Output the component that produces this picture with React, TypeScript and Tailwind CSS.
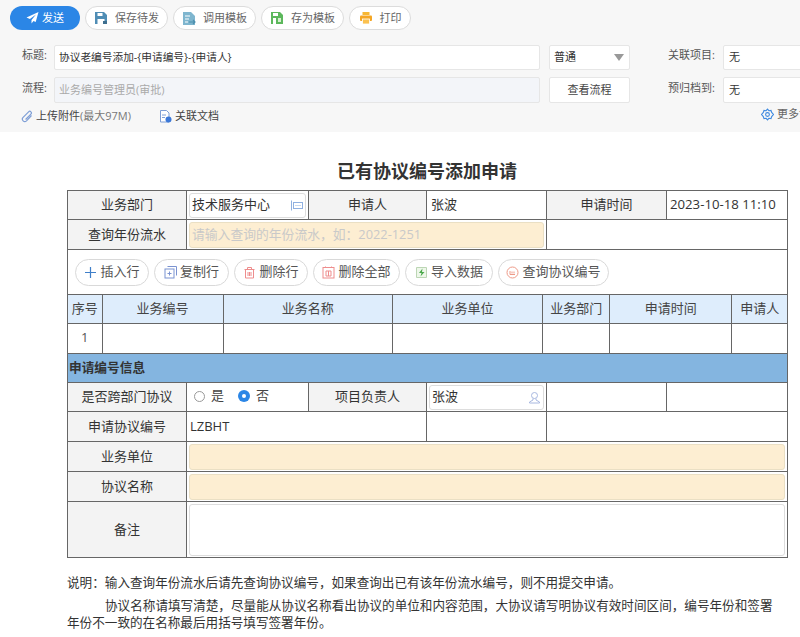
import type { ReactNode } from "react";

const font = "font-['Open_Sans','Noto_Sans_CJK_SC',sans-serif]";

function ToolButton({ icon, label, width }: { icon: ReactNode; label: string; width: string }) {
  return (
    <button className={`${width} h-6 shrink-0 rounded-full border border-[#dcdcdc] bg-white flex items-center justify-center gap-[7px] text-[11px] text-[#666]`}>
      {icon}
      {label}
    </button>
  );
}

function RowButton({ icon, label, width }: { icon: ReactNode; label: string; width: string }) {
  return (
    <button className={`${width} h-[27px] shrink-0 rounded-full border border-[#d9d9d9] bg-white flex items-center justify-center gap-[3px] text-[13px] text-[#555]`}>
      {icon}
      {label}
    </button>
  );
}

const SaveIcon = (
  <svg width="14" height="14" viewBox="0 0 14 14">
    <path d="M1 1h9l3 3v9H1z" fill="#4f8db5" />
    <rect x="3.5" y="2" width="5" height="3" fill="#fff" />
    <rect x="3.5" y="8" width="7" height="5" fill="#fff" />
    <rect x="9" y="10" width="4" height="3" fill="#3f6f8f" />
  </svg>
);

const LoadIcon = (
  <svg width="14" height="15" viewBox="0 0 14 15">
    <path d="M1 1h8l4 4v9H1z" fill="#7fb6cf" />
    <path d="M3 5h5M3 8h4M3 11h3" stroke="#fff" strokeWidth="1.2" />
    <path d="M7 11h6M11 9l2 2-2 2" stroke="#4d8fae" strokeWidth="1.2" fill="none" />
  </svg>
);

const SaveTemplateIcon = (
  <svg width="14" height="14" viewBox="0 0 14 14">
    <path d="M1 1h9l3 3v9H1z" fill="#5cb85c" />
    <rect x="3" y="2" width="5" height="3" fill="#fff" />
    <rect x="3" y="7" width="3" height="6" fill="#fff" />
    <rect x="8" y="7" width="3" height="4" fill="#d7f0d0" />
  </svg>
);

const PrintIcon = (
  <svg width="14" height="14" viewBox="0 0 14 14">
    <rect x="3.5" y="1" width="7" height="3" fill="#f7b733" />
    <rect x="1" y="4.5" width="12" height="5.5" rx="1" fill="#f5a623" />
    <rect x="3.5" y="8" width="7" height="5" fill="#fbc14f" stroke="#fff" strokeWidth="0.8" />
  </svg>
);

function Th({ children }: { children: ReactNode }) {
  return <td className="border border-[#666] bg-[#f3f3f3] text-center text-[13px] text-[#333]">{children}</td>;
}

function Field({ className, children }: { className: string; children?: ReactNode }) {
  return <div className={`h-[26px] mx-[2px] rounded-[3px] border flex items-center px-[2px] ${className}`}>{children}</div>;
}

export default function App() {
  return (
    <div className={`w-[800px] h-[637px] overflow-hidden bg-white ${font} text-[#333]`}>
      <div className="h-[132px] bg-[#f7f7f7] overflow-hidden">
        <div className="flex gap-[5px] pl-[10px] pt-[6px]">
          <button className="w-[70px] h-6 shrink-0 rounded-full bg-[#2b86e6] text-white text-[11px] flex items-center justify-center gap-[3px]">
            <svg width="13" height="12" viewBox="0 0 13 12">
              <path d="M12.5 0L0.5 5.5l3.4 1.6L10 2.5 5.5 8v3.5l2-2.4 2.2 1z" fill="#fff" />
            </svg>
            发送
          </button>
          <ToolButton icon={SaveIcon} label="保存待发" width="w-[83px]" />
          <ToolButton icon={LoadIcon} label="调用模板" width="w-[83px]" />
          <ToolButton icon={SaveTemplateIcon} label="存为模板" width="w-[83px]" />
          <ToolButton icon={PrintIcon} label="打印" width="w-[62px]" />
        </div>

        <div className="flex items-center mt-[15px] h-[25px] text-[11px]">
          <span className="w-[54px] shrink-0 pl-[22px] text-[#555] -mt-1">标题:</span>
          <div className="w-[486px] shrink-0 h-full bg-white border border-[#e6e6e6] rounded-[2px] flex items-center px-[4px] text-[10.700px] text-[#333]">
            协议老编号添加-{"{"}申请编号{"}"}-{"{"}申请人{"}"}
          </div>
          <div className="w-[81px] shrink-0 h-full ml-[9px] bg-white border border-[#e6e6e6] rounded-[2px] flex items-center justify-between pl-[4px] pr-[5px]">
            普通
            <svg width="10" height="7" viewBox="0 0 10 7"><path d="M0 0h10L5 7z" fill="#999" /></svg>
          </div>
          <span className="w-[55px] ml-[38px] shrink-0 text-[#555] -mt-1 whitespace-nowrap">关联项目:</span>
          <div className="w-[100px] shrink-0 h-full bg-white border border-[#e6e6e6] rounded-[2px] flex items-center px-[5px]">无</div>
        </div>

        <div className="flex items-center mt-[7px] h-[26px] text-[11px]">
          <span className="w-[54px] shrink-0 pl-[22px] text-[#555] -mt-1">流程:</span>
          <div className="w-[486px] shrink-0 h-full bg-[#f3f5f9] border border-[#e6e6e6] rounded-[2px] flex items-center px-[4px] text-[#aaa]">
            业务编号管理员(审批)
          </div>
          <div className="w-[81px] shrink-0 h-full ml-[9px] bg-white border border-[#e6e6e6] rounded-[2px] flex items-center justify-center text-[#444]">
            查看流程
          </div>
          <span className="w-[55px] ml-[38px] shrink-0 text-[#555] -mt-1 whitespace-nowrap">预归档到:</span>
          <div className="w-[100px] shrink-0 h-full bg-white border border-[#e6e6e6] rounded-[2px] flex items-center px-[5px]">无</div>
        </div>

        <div className="flex items-center mt-[5px] h-[16px] text-[11px] text-[#444]">
          <svg className="ml-[21px] shrink-0" width="12" height="13" viewBox="0 0 12 13" fill="none" stroke="#7f9fd6" strokeWidth="1.2">
            <path d="M10.5 5.5L5.5 10.8a2.4 2.4 0 01-3.4-3.4L7.6 1.8a1.6 1.6 0 012.3 2.3L4.6 9.5" />
          </svg>
          <span className="ml-[3px] w-[123px] shrink-0 whitespace-nowrap">
            上传附件<span className="text-[#777]">(最大97M)</span>
          </span>
          <svg className="shrink-0" width="13" height="13" viewBox="0 0 13 13">
            <path d="M1.500.500h6l2.500 2.500v9h-8.500z" fill="#fff" stroke="#7f9fd6" />
            <path d="M3 5h4M3 7.500h3" stroke="#7f9fd6" />
            <circle cx="9.500" cy="9.500" r="3" fill="#3b78d8" />
          </svg>
          <span className="ml-[3px] w-[586px] shrink-0 whitespace-nowrap">关联文档</span>
          <svg className="-mt-1 shrink-0" width="13" height="13" viewBox="0 0 24 24" fill="none" stroke="#3f8ae0" strokeWidth="2">
            <circle cx="12" cy="12" r="3.500" />
            <path d="M12 2l2.500 3 4-.6 1.200 3.800L23 12l-3.300 3.800-1.200 3.800-4-.6L12 22l-2.500-3-4 .6-1.200-3.800L1 12l3.300-3.800 1.200-3.800 4 .6z" />
          </svg>
          <span className="ml-[3px] -mt-1 shrink-0 whitespace-nowrap text-[#666]">更多设置</span>
        </div>
      </div>

      <h1 className="text-center text-[18px] leading-[24px] font-bold text-[#333] mt-[27px] mb-[7px] pl-[54px]">已有协议编号添加申请</h1>

      <table className="ml-[67px] w-[720px] table-fixed border-collapse text-[13px]">
        <colgroup>
          <col className="w-[119px]" />
          <col className="w-[122px]" />
          <col className="w-[118px]" />
          <col className="w-[120px]" />
          <col className="w-[120px]" />
          <col className="w-[121px]" />
        </colgroup>
        <tbody>
          <tr className="h-[29px]">
            <Th>业务部门</Th>
            <td className="border border-[#666] p-0">
              <Field className="border-[#ddd] bg-white justify-between !h-[25px]">
                技术服务中心
                <svg width="12" height="11" viewBox="0 0 12 11" fill="none" stroke="#8fb0e0">
                  <path d="M.5.500v10" />
                  <rect x="2.500" y="2.500" width="9" height="6" />
                  <path d="M4.500 5.500h5" strokeDasharray="1 1" />
                </svg>
              </Field>
            </td>
            <Th>申请人</Th>
            <td className="border border-[#666] px-[4px]">张波</td>
            <Th>申请时间</Th>
            <td className="border border-[#666] px-[3px] whitespace-nowrap text-[13.200px]">2023-10-18 11:10</td>
          </tr>
          <tr className="h-[30px]">
            <Th>查询年份流水</Th>
            <td colSpan={3} className="border border-[#666] p-0">
              <Field className="border-[#eadfc4] bg-[#fdeed2] text-[#c9c9c9] text-[12.800px]">请输入查询的年份流水，如：2022-1251</Field>
            </td>
            <td colSpan={2} className="border border-[#666]" />
          </tr>
          <tr className="h-[45px]">
            <td colSpan={6} className="border border-[#666] p-0">
              <div className="flex gap-[5px] pl-[7px]">
                <RowButton
                  width="w-[74px]"
                  label="插入行"
                  icon={
                    <svg width="13" height="13" viewBox="0 0 13 13"><path d="M6.500 1v11M1 6.500h11" stroke="#3f7fc9" strokeWidth="1.200" /></svg>
                  }
                />
                <RowButton
                  width="w-[75px]"
                  label="复制行"
                  icon={
                    <svg width="13" height="13" viewBox="0 0 13 13" fill="none" stroke="#7b93d1">
                      <path d="M3.500.500h9v9" />
                      <rect x="1" y="3" width="9" height="9" />
                      <path d="M5.500 5.500v4M3.500 7.500h4" />
                    </svg>
                  }
                />
                <RowButton
                  width="w-[74px]"
                  label="删除行"
                  icon={
                    <svg width="13" height="13" viewBox="0 0 13 13" fill="none" stroke="#ee8d8d">
                      <path d="M1.500 3.500h10M4.500 3.500v-2h4v2M2.500 3.500v8.500h8v-8.500M5 6v4M6.500 6v4M8 6v4" />
                    </svg>
                  }
                />
                <RowButton
                  width="w-[87px]"
                  label="删除全部"
                  icon={
                    <svg width="13" height="13" viewBox="0 0 13 13" fill="none" stroke="#ee8d8d">
                      <rect x="1" y="1.500" width="11" height="10.500" />
                      <path d="M3.500 1.500v-1M9.500 1.500v-1M4 5h5v5h-5zM6.500 5v5" />
                    </svg>
                  }
                />
                <RowButton
                  width="w-[88px]"
                  label="导入数据"
                  icon={
                    <svg width="13" height="13" viewBox="0 0 13 13">
                      <path d="M1.500 1.500h10v10h-10z" fill="#eef7ea" stroke="#bcd6b4" />
                      <path d="M7.500 2.500L4 7h2.500L5.500 10.500 9.500 6H7z" fill="#4aa84a" />
                    </svg>
                  }
                />
                <RowButton
                  width="w-[111px]"
                  label="查询协议编号"
                  icon={
                    <svg width="13" height="13" viewBox="0 0 13 13" fill="none" stroke="#ee9a88">
                      <circle cx="6.500" cy="6.500" r="5.500" />
                      <path d="M4 5v3.500h5M6 5.500v2M8 5.500v2" />
                    </svg>
                  }
                />
              </div>
            </td>
          </tr>
          <tr>
            <td colSpan={6} className="border-x border-[#666] p-0">
              <table className="w-full table-fixed border-collapse">
                <colgroup>
                  <col className="w-[34px]" />
                  <col className="w-[121px]" />
                  <col className="w-[169px]" />
                  <col className="w-[150px]" />
                  <col className="w-[67px]" />
                  <col className="w-[122px]" />
                  <col className="w-[55px]" />
                </colgroup>
                <tbody>
                  <tr className="h-[28px] bg-[#deedfc] text-center text-[#444]">
                    {["序号", "业务编号", "业务名称", "业务单位", "业务部门", "申请时间", "申请人"].map((h) => (
                      <td key={h} className="border border-[#666] border-t-0 first:border-l-0 last:border-r-0 whitespace-nowrap">{h}</td>
                    ))}
                  </tr>
                  <tr className="h-[30px] text-center text-[#555]">
                    <td className="border border-[#666] border-l-0">1</td>
                    <td className="border border-[#666]" />
                    <td className="border border-[#666]" />
                    <td className="border border-[#666]" />
                    <td className="border border-[#666]" />
                    <td className="border border-[#666]" />
                    <td className="border border-[#666] border-r-0" />
                  </tr>
                </tbody>
              </table>
            </td>
          </tr>
          <tr className="h-[29px] bg-[#84b5e0]">
            <td colSpan={6} className="border border-[#666] border-t-0 px-[1px] font-bold text-[12.700px] text-[#333]">申请编号信息</td>
          </tr>
          <tr className="h-[29px]">
            <Th>是否跨部门协议</Th>
            <td className="border border-[#666] px-[7px]">
              <div className="flex items-center text-[#444] -mt-[2px]">
                <span className="w-[11px] h-[11px] rounded-full border border-[#999] bg-white" />
                <span className="ml-[6px]">是</span>
                <span className="ml-[14px] w-[12px] h-[12px] rounded-full bg-[#2b86e6] flex items-center justify-center">
                  <span className="w-[4px] h-[4px] rounded-full bg-white" />
                </span>
                <span className="ml-[6px]">否</span>
              </div>
            </td>
            <Th>项目负责人</Th>
            <td className="border border-[#666] p-0">
              <Field className="border-[#ddd] bg-white justify-between !h-[25px]">
                张波
                <svg width="13" height="13" viewBox="0 0 13 13" fill="none" stroke="#a8b8e0">
                  <circle cx="6.500" cy="4.500" r="3" />
                  <path d="M5 7.500v1.500l-3.500 2v1h10v-1L8 9V7.500" />
                </svg>
              </Field>
            </td>
            <td className="border border-[#666]" />
            <td className="border border-[#666]" />
          </tr>
          <tr className="h-[30px]">
            <Th>申请协议编号</Th>
            <td colSpan={2} className="border border-[#666] px-[3px]">LZBHT</td>
            <td className="border border-[#666]" />
            <td colSpan={2} className="border border-[#666]" />
          </tr>
          <tr className="h-[30px]">
            <Th>业务单位</Th>
            <td colSpan={5} className="border border-[#666] p-0">
              <Field className="border-[#eadfc4] bg-[#fdeed2]" />
            </td>
          </tr>
          <tr className="h-[30px]">
            <Th>协议名称</Th>
            <td colSpan={5} className="border border-[#666] p-0">
              <Field className="border-[#eadfc4] bg-[#fdeed2]" />
            </td>
          </tr>
          <tr className="h-[56px]">
            <Th>备注</Th>
            <td colSpan={5} className="border border-[#666] p-0">
              <Field className="border-[#ddd] bg-white !h-[52px]" />
            </td>
          </tr>
        </tbody>
      </table>

      <div className="ml-[67px] w-[714px] mt-[16px] text-[12.600px] leading-[17px] text-[#333]">
        <p>说明：输入查询年份流水后请先查询协议编号，如果查询出已有该年份流水编号，则不用提交申请。</p>
        <p className="mt-[6px] indent-[38px]">
          协议名称请填写清楚，尽量能从协议名称看出协议的单位和内容范围，大协议请写明协议有效时间区间，编号年份和签署年份不一致的在名称最后用括号填写签署年份。
        </p>
      </div>
    </div>
  );
}
